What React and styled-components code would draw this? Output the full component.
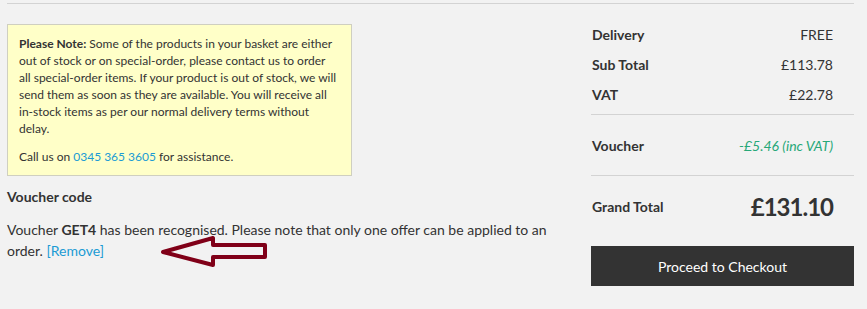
import styled, { createGlobalStyle } from "styled-components";

const GlobalStyle = createGlobalStyle`
  body {
    margin: 0;
    background: #f2f2f2;
    font-family: Lato, "Open Sans", sans-serif;
    color: #333;
  }
`;

const Page = styled.div`
  padding: 3px 13px 0 7px;
  height: 306px;
`;

const Basket = styled.div`
  display: flex;
  justify-content: space-between;
  border-top: 1px solid #d3d3d3;
`;

const Left = styled.div`
  position: relative;
  width: 555px;
  padding-top: 20px;
`;

const Note = styled.div`
  width: 321px;
  padding: 10px 11px;
  background: #ffffc8;
  border: 1px solid #cfcfc0;
  font-size: 12px;
  line-height: 17px;

  p {
    margin: 0;
  }
  p + p {
    margin-top: 11px;
  }
`;

const NoBreak = styled.span`
  white-space: nowrap;
`;

const Link = styled.a`
  color: #1b9bd4;
  text-decoration: none;
  cursor: pointer;
`;

const Voucher = styled.div`
  margin-top: 11px;
  font-size: 14px;
`;

const VoucherTitle = styled.h4`
  margin: 0;
  font-size: 14px;
  font-weight: 700;
  line-height: 20px;
`;

const VoucherText = styled.p`
  margin: 12px 0 0;
  line-height: 21px;
`;

const Arrow = styled.svg`
  position: absolute;
  left: 143px;
  top: 226px;
`;

const Summary = styled.div`
  width: 263px;
`;

const Group = styled.div`
  padding: ${(p) => p.$pad};
  border-bottom: ${(p) => (p.$line ? "1px solid #d3d3d3" : "none")};
`;

const Row = styled.div`
  display: flex;
  justify-content: space-between;
  align-items: center;
  height: 30px;
  padding: 0 21px 0 1px;
  font-size: 14px;
`;

const Label = styled.span`
  font-weight: 700;
`;

const Value = styled.span`
  color: ${(p) => p.$color || "#333"};
  font-size: ${(p) => p.$size || "14px"};
  font-weight: ${(p) => (p.$bold ? 700 : 400)};
  letter-spacing: ${(p) => (p.$bold ? "-1px" : "normal")};
`;

const Checkout = styled.button`
  display: block;
  width: 100%;
  height: 40px;
  margin-top: 25px;
  border: none;
  background: #333;
  color: #fff;
  font-family: inherit;
  font-size: 14px;
  cursor: pointer;
`;

const App = () => (
  <>
    <GlobalStyle />
    <Page>
      <Basket>
        <Left>
          <Note>
            <p>
              <b>Please Note:</b> Some of the products in your basket are either
              out of stock or on special-order, please contact us to order
              <br />
              all special-order items. If your product is out of stock, we will
              send them as soon as they are available. You will receive all{" "}
              <NoBreak>in-stock</NoBreak> items as per our normal delivery terms
              without
              <br />
              delay.
            </p>
            <p>
              Call us on <Link>0345 365 3605</Link> for assistance.
            </p>
          </Note>
          <Voucher>
            <VoucherTitle>Voucher code</VoucherTitle>
            <VoucherText>
              Voucher <b>GET4</b> has been recognised. Please note that only one
              offer can be applied to an order. <Link>[Remove]</Link>
            </VoucherText>
          </Voucher>
          <Arrow width="130" height="45" viewBox="0 0 130 45">
            <polygon
              points="13,22 63,8 63,15 115,15 115,27 63,27 63,35"
              fill="none"
              stroke="#800018"
              strokeWidth="4"
              strokeLinejoin="round"
            />
          </Arrow>
        </Left>
        <Summary>
          <Group $pad="15px 0 5px" $line>
            <Row>
              <Label>Delivery</Label>
              <Value>FREE</Value>
            </Row>
            <Row>
              <Label>Sub Total</Label>
              <Value>£113.78</Value>
            </Row>
            <Row>
              <Label>VAT</Label>
              <Value>£22.78</Value>
            </Row>
          </Group>
          <Group $pad="15px 0" $line>
            <Row>
              <Label>Voucher</Label>
              <Value $color="#27a878">
                <i>-£5.46 (inc VAT)</i>
              </Value>
            </Row>
          </Group>
          <Group $pad="15px 0 0">
            <Row>
              <Label>Grand Total</Label>
              <Value $size="24px" $bold>
                £131.10
              </Value>
            </Row>
            <Checkout>Proceed to Checkout</Checkout>
          </Group>
        </Summary>
      </Basket>
    </Page>
  </>
);

export default App;
